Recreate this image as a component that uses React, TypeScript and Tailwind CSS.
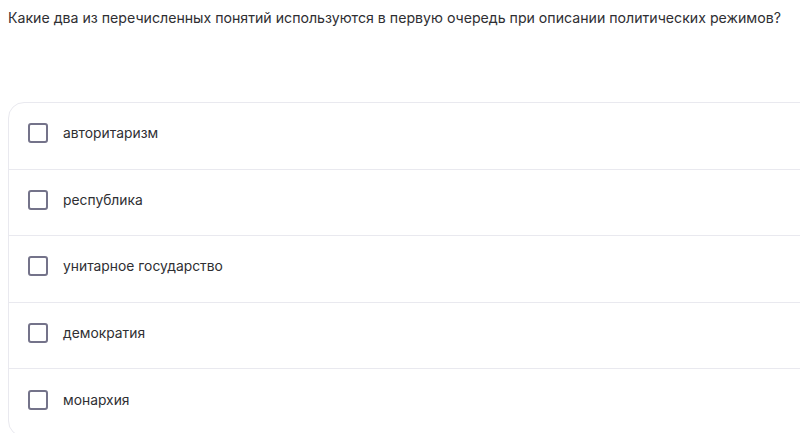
const options = ['авторитаризм', 'республика', 'унитарное государство', 'демократия', 'монархия'];

export default function App() {
    return (
        <div className="w-[800px] h-[433px] overflow-hidden bg-white px-[8px] pt-[9px] font-['Inter',sans-serif] text-[#2f2f33]">
            {/* Question */}
            <p className="text-[14.15px] leading-[17px]">
                Какие два из перечисленных понятий используются в первую очередь при описании политических режимов?
            </p>

            {/* Answer options */}
            <div className="mt-[76px] w-[820px] rounded-[16px] border border-[#e9e9ef] bg-white">
                {options.map((opt, i) => (
                    <label
                        key={opt}
                        className={`flex h-[66.5px] items-center gap-[15px] pb-[5px] pl-[19px] ${i < options.length - 1 ? 'border-b border-[#e9e9ef]' : ''}`}
                    >
                        <span className="h-[20px] w-[20px] flex-shrink-0 rounded-[3px] border-2 border-[#74738a]" />
                        <span className="text-[13.85px] leading-[20px]">{opt}</span>
                    </label>
                ))}
            </div>
        </div>
    );
}
